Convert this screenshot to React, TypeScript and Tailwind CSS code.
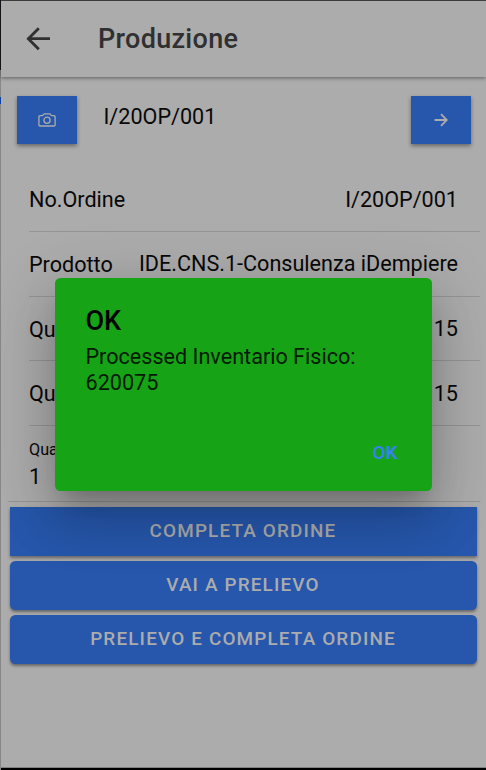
import type { ReactNode } from 'react';

function Row({ label, value }: { label: string; value: string }) {
  return (
    <div className="ml-7 mr-[6px] flex h-[64.75px] items-center justify-between border-b-[1.35px] border-[#959595] pr-[22px] text-[21.6px] leading-none text-[#080808]">
      <span className="pt-[2px]">{label}</span>
      <span className="pt-px">{value}</span>
    </div>
  );
}

function IconButton({ children }: { children: ReactNode }) {
  return (
    <button className="flex h-12 w-[60px] items-center justify-center bg-[#2657ac] text-[#acacac] shadow-[0_2px_4px_rgba(0,0,0,0.4)]">
      {children}
    </button>
  );
}

function ActionButton({ label, square = false }: { label: string; square?: boolean }) {
  return (
    <button
      className={`flex h-[48.6px] w-full items-center justify-center bg-[#2657ac] pr-px text-[18.9px] font-medium leading-none tracking-[1.16px] text-[#acacac] shadow-[0_2px_3px_rgba(0,0,0,0.4)] ${square ? '' : 'rounded-[5.4px]'}`}
    >
      {label}
    </button>
  );
}

export default function App() {
  return (
    <div className="relative flex h-[770px] w-[486px] overflow-hidden bg-[#acacac] font-[Roboto,sans-serif]">
      <div className="flex w-px flex-col bg-[#888]">
        <div className="h-[70px] bg-[#15151b]" />
        <div className="mt-[27px] h-[7px] bg-[#0c439c]" />
      </div>
      <div className="flex w-[485px] flex-col border-t border-[#444]">
        <header className="flex h-[76px] shrink-0 items-center pl-[25px] shadow-[0_1px_4px_rgba(0,0,0,0.45)]">
          <svg width="25" height="24" viewBox="0 0 25 24" fill="none" stroke="#303030" strokeWidth="2.8">
            <path d="M24 11.7H3M12.8 1.2 2.3 11.7l10.5 10.5" />
          </svg>
          <h1 className="ml-[47px] pt-px text-[27px] font-medium leading-none tracking-[0.3px] text-[#303030]">Produzione</h1>
        </header>
        <div className="flex h-[90px] shrink-0 items-start justify-between pl-4 pr-[15.5px] pt-[19px]">
          <div className="flex">
            <IconButton>
              <svg width="18" height="14" viewBox="0 0 18 14" fill="none" stroke="currentColor" strokeWidth="1.3">
                <path d="M2 2.7h2.4L6.2.9h5.6l1.8 1.8H16c.7 0 1.1.4 1.1 1.1v8.1c0 .7-.4 1.1-1.1 1.1H2c-.7 0-1.1-.4-1.1-1.1V3.8c0-.7.4-1.1 1.1-1.1Z" />
                <circle cx="9" cy="7.3" r="3.1" />
              </svg>
            </IconButton>
            <span className="ml-[26.5px] mt-[10px] text-[21.6px] leading-[22px] text-[#080808]">I/20OP/001</span>
          </div>
          <IconButton>
            <svg width="14" height="14" viewBox="0 0 14 14" fill="none" stroke="currentColor" strokeWidth="1.8">
              <path d="M.5 7h12M7 1.2 12.8 7 7 12.8" />
            </svg>
          </IconButton>
        </div>
        <main className="flex flex-col">
          <Row label="No.Ordine" value="I/20OP/001" />
          <Row label="Prodotto" value="IDE.CNS.1-Consulenza iDempiere" />
          <Row label="Qu" value="15" />
          <Row label="Qu" value="15" />
          <div className="ml-[7px] mr-[6px] flex h-[75.5px] flex-col border-b-[1.35px] border-[#959595] pl-[21px] pt-[14px] text-[#080808]">
            <span className="text-[16.2px] leading-[19px]">Qua</span>
            <span className="mt-[7px] text-[21.6px] leading-[22px]">1</span>
          </div>
        </main>
        <div className="ml-[9px] mr-[9px] mt-[5.5px] flex flex-col gap-[5.4px]">
          <ActionButton label="COMPLETA ORDINE" square />
          <ActionButton label="VAI A PRELIEVO" />
          <ActionButton label="PRELIEVO E COMPLETA ORDINE" />
        </div>
        <div className="mt-auto h-[3px] shrink-0 border-t border-[#808080] bg-black" />
      </div>

      <div
        role="alertdialog"
        className="absolute left-[55px] top-[278px] flex h-[213px] w-[377px] flex-col rounded-[5.4px] bg-[#16a316] pl-[30.5px] pr-[34.5px] pt-[29px] text-black shadow-[0_15px_20px_-9px_rgba(0,0,0,0.2),0_32px_51px_4px_rgba(0,0,0,0.14),0_12px_62px_11px_rgba(0,0,0,0.12)]"
      >
        <h2 className="text-[27px] font-medium leading-[28px]">OK</h2>
        <p className="mt-[9px] text-[21.6px] leading-[26px] text-[#031903]">
          Processed Inventario Fisico:
          <br />
          620075
        </p>
        <button className="mt-[45px] self-end text-[18.9px] font-medium leading-[24px] text-[#3880ff]">OK</button>
      </div>
    </div>
  );
}
